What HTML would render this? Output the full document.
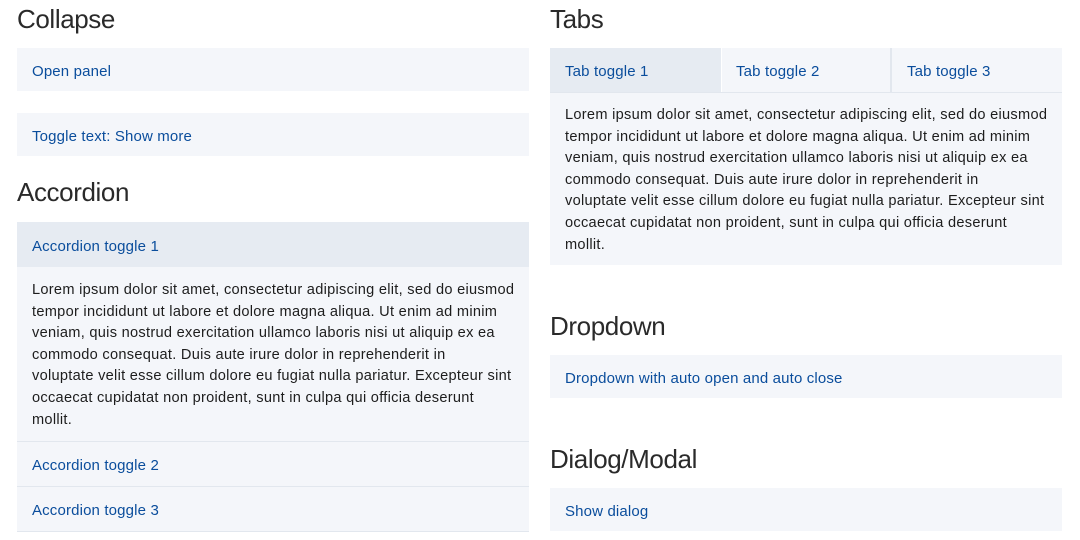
<!DOCTYPE html>
<html><head><style>
*{margin:0;padding:0;box-sizing:border-box}
body{width:1080px;height:540px;background:#fff;font-family:"Liberation Sans",sans-serif;position:relative;overflow:hidden;color:#1a1a1a}
.h{position:absolute;font-size:26px;font-weight:300;color:#2a2a2a;line-height:30px;letter-spacing:-0.4px}
.b{position:absolute;background:#f4f6fa;color:#0a4d9c;font-size:15px;padding-left:15px;padding-top:3px;display:flex;align-items:center;letter-spacing:0.15px}
.a{background:#e6ebf2}
.p{position:absolute;background:#f4f6fa;font-size:14.6px;line-height:21.6px;padding:12px 15px;color:#1d1d1d;white-space:nowrap;letter-spacing:0.28px}
.line{position:absolute;height:1px;background:#e2e7ee}
</style></head><body>
<div class="h" style="left:17px;top:4px">Collapse</div>
<div class="b" style="left:17px;top:48px;width:512px;height:43px">Open panel</div>
<div class="b" style="left:17px;top:113px;width:512px;height:43px">Toggle text: Show more</div>
<div class="h" style="left:17px;top:177px">Accordion</div>
<div class="b a" style="left:17px;top:222px;width:512px;height:45px">Accordion toggle 1</div>
<div class="p" style="left:17px;top:267px;width:512px;height:174px;padding-top:13px">Lorem ipsum dolor sit amet, consectetur adipiscing elit, sed do eiusmod<br>tempor incididunt ut labore et dolore magna aliqua. Ut enim ad minim<br>veniam, quis nostrud exercitation ullamco laboris nisi ut aliquip ex ea<br>commodo consequat. Duis aute irure dolor in reprehenderit in<br>voluptate velit esse cillum dolore eu fugiat nulla pariatur. Excepteur sint<br>occaecat cupidatat non proident, sunt in culpa qui officia deserunt<br>mollit.</div>
<div class="line" style="left:17px;top:441px;width:512px"></div>
<div class="b" style="left:17px;top:442px;width:512px;height:44px">Accordion toggle 2</div>
<div class="line" style="left:17px;top:486px;width:512px"></div>
<div class="b" style="left:17px;top:487px;width:512px;height:44px">Accordion toggle 3</div>
<div class="line" style="left:17px;top:531px;width:512px"></div>

<div class="h" style="left:550px;top:4px">Tabs</div>
<div class="b a" style="left:550px;top:48px;width:171px;height:44px">Tab toggle 1</div>
<div class="b" style="left:722px;top:48px;width:168px;height:44px;padding-left:14px">Tab toggle 2</div>
<div class="line" style="left:890px;top:48px;width:2px;height:44px"></div>
<div class="b" style="left:892px;top:48px;width:170px;height:44px">Tab toggle 3</div>
<div class="line" style="left:550px;top:92px;width:512px"></div>
<div class="p" style="left:550px;top:93px;width:512px;height:172px;padding-top:12px">Lorem ipsum dolor sit amet, consectetur adipiscing elit, sed do eiusmod<br>tempor incididunt ut labore et dolore magna aliqua. Ut enim ad minim<br>veniam, quis nostrud exercitation ullamco laboris nisi ut aliquip ex ea<br>commodo consequat. Duis aute irure dolor in reprehenderit in<br>voluptate velit esse cillum dolore eu fugiat nulla pariatur. Excepteur sint<br>occaecat cupidatat non proident, sunt in culpa qui officia deserunt<br>mollit.</div>
<div class="h" style="left:550px;top:311px">Dropdown</div>
<div class="b" style="left:550px;top:355px;width:512px;height:43px">Dropdown with auto open and auto close</div>
<div class="h" style="left:550px;top:444px">Dialog/Modal</div>
<div class="b" style="left:550px;top:488px;width:512px;height:43px">Show dialog</div>
</body></html>
